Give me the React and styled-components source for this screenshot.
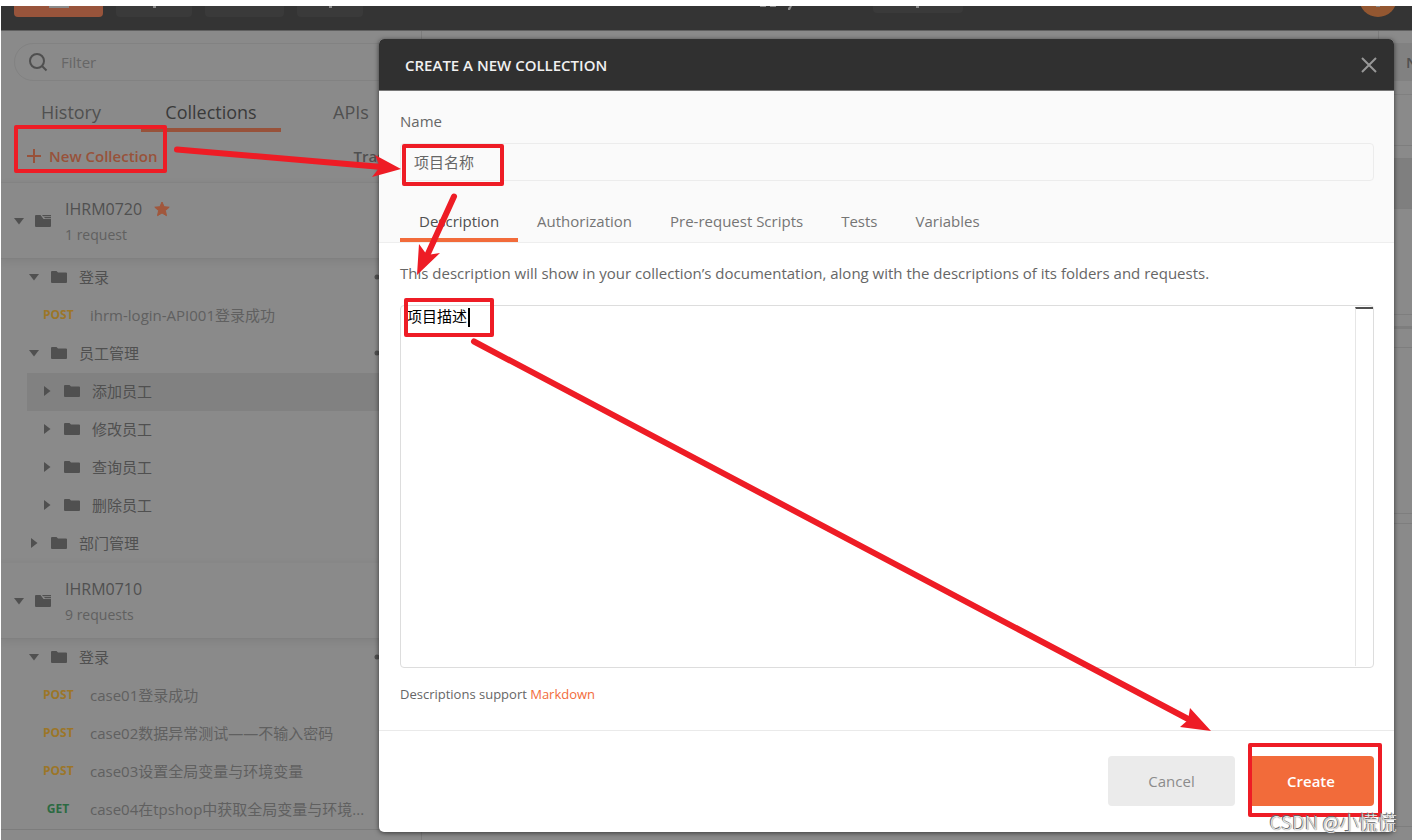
import { useState } from "react";
import styled, { createGlobalStyle } from "styled-components";

const collections = [
    {
        name: "IHRM0720",
        count: "1 request",
        starred: true,
        items: [
            { type: "folder", name: "登录", open: true, menu: true },
            { type: "request", method: "POST", name: "ihrm-login-API001登录成功" },
            { type: "folder", name: "员工管理", open: true, menu: true },
            { type: "folder", name: "添加员工", nested: true, selected: true },
            { type: "folder", name: "修改员工", nested: true },
            { type: "folder", name: "查询员工", nested: true },
            { type: "folder", name: "删除员工", nested: true },
            { type: "folder", name: "部门管理" },
        ],
    },
    {
        name: "IHRM0710",
        count: "9 requests",
        items: [
            { type: "folder", name: "登录", open: true, menu: true },
            { type: "request", method: "POST", name: "case01登录成功" },
            { type: "request", method: "POST", name: "case02数据异常测试——不输入密码" },
            { type: "request", method: "POST", name: "case03设置全局变量与环境变量" },
            { type: "request", method: "GET", name: "case04在tpshop中获取全局变量与环境..." },
        ],
    },
];

const sideTabs = ["History", "Collections", "APIs"];
const modalTabs = ["Description", "Authorization", "Pre-request Scripts", "Tests", "Variables"];

export default function App(){
    return(
        <Page>
            <GlobalStyle />
            <TopBar />
            <Body>
                <Sidebar />
                <Workspace />
            </Body>
            <Overlay>
                <CreateModal />
            </Overlay>
            <Annotations />
            <Watermark>CSDN @小慌慌</Watermark>
        </Page>
    );
}

function TopBar(){
    return(
        <Bar>
            <BarGroup>
                <BarButton $width={89} $primary><Stub $width={20} /></BarButton>
                <BarButton $width={76}><Stub $width={3} /></BarButton>
                <BarButton $width={79} />
                <BarButton $width={66}><Stub $width={3} /></BarButton>
            </BarGroup>
            <BarGroup>
                <WorkspaceIcon />
                <BarButton $width={90} $small><Stub $width={3} /></BarButton>
            </BarGroup>
            <Avatar><Stub $width={4} /></Avatar>
        </Bar>
    );
}

function Sidebar(){
    const [tab, setTab] = useState("Collections");

    return(
        <Side>
            <Filter>
                <SearchIcon />
                <input aria-label="Filter" placeholder="Filter" />
            </Filter>
            <SideTabs>
                {sideTabs.map(t => (
                    <SideTab key={t} $active={t === tab} onClick={() => setTab(t)}>{t}</SideTab>
                ))}
            </SideTabs>
            <Actions>
                <NewButton><PlusIcon />New Collection</NewButton>
                <TrashButton>Trash</TrashButton>
            </Actions>
            {collections.map(c => <Collection key={c.name} collection={c} />)}
            <NextCollection />
        </Side>
    );
}

function Collection({ collection }){
    return(
        <section>
            <CollectionHead>
                <Caret open />
                <CollectionIcon />
                <div>
                    <CollectionName>{collection.name}{collection.starred && <StarIcon />}</CollectionName>
                    <CollectionCount>{collection.count}</CollectionCount>
                </div>
            </CollectionHead>
            <Items>
                {collection.items.map(item => item.type === "folder" ? (
                    <Folder key={item.name} $nested={item.nested} $selected={item.selected}>
                        <Caret open={item.open} />
                        <FolderIcon />
                        <span>{item.name}</span>
                        {item.menu && <DotsIcon />}
                    </Folder>
                ) : (
                    <Request key={item.name}>
                        <Method $method={item.method}>{item.method}</Method>
                        <span>{item.name}</span>
                    </Request>
                ))}
            </Items>
        </section>
    );
}

function Workspace(){
    return(
        <Work>
            <EnvRow>
                <div></div>
                <EnvCell>
                    <select aria-label="N"><option>N</option></select>
                </EnvCell>
            </EnvRow>
            <Strip $height={51} />
            <Strip $height={13} />
            <Strip $height={50} $dark />
            <Strip $height={106} />
            <Strip $height={14} $thick />
            <Strip $height={19} />
            <Strip $height={166} />
            <Strip $height={10} />
            <Strip $height={303} />
        </Work>
    );
}

function CreateModal(){
    const [tab, setTab] = useState("Description");

    return(
        <Modal role="dialog" aria-labelledby="modal-title">
            <ModalHeader>
                <h2 id="modal-title">CREATE A NEW COLLECTION</h2>
                <button aria-label="Close"><CloseIcon /></button>
            </ModalHeader>
            <ModalTop>
                <Label htmlFor="name">Name</Label>
                <NameInput id="name" defaultValue="项目名称" />
                <ModalTabs>
                    {modalTabs.map(t => (
                        <ModalTab key={t} $active={t === tab} onClick={() => setTab(t)}>{t}</ModalTab>
                    ))}
                </ModalTabs>
            </ModalTop>
            <ModalContent>
                <Label htmlFor="description">
                    This description will show in your collection’s documentation, along with the descriptions of its folders and requests.
                </Label>
                <Editor>
                    <textarea id="description" defaultValue="项目描述" />
                    <TextCursor />
                    <Gutter />
                </Editor>
                <Support>Descriptions support <a href="#markdown">Markdown</a></Support>
            </ModalContent>
            <ModalFooter>
                <CancelButton>Cancel</CancelButton>
                <CreateButton>Create</CreateButton>
            </ModalFooter>
        </Modal>
    );
}

function Annotations(){
    return(
        <Marks width="1412" height="840" viewBox="0 0 1412 840">
            <g fill="none" stroke="#ee1c25" strokeWidth="4" strokeLinejoin="round">
                <rect x="16" y="127" width="149" height="44" />
                <rect x="404" y="146" width="98" height="38" />
                <rect x="406" y="300" width="86" height="35" />
                <rect x="1250" y="745" width="130" height="70" />
            </g>
            <g fill="none" stroke="#ee1c25" strokeWidth="6" strokeLinecap="round">
                <path d="M177 149.500L382 167" />
                <path d="M454 196.500L426 258" />
                <path d="M474 341.500L1190 720" />
            </g>
            <g fill="#ee1c25">
                <path d="M401 169L375 155L380 167L372 177Z" />
                <path d="M417 275L419 244L427 255L440 253Z" />
                <path d="M1211 731L1190 708L1188 720L1180 727Z" />
            </g>
        </Marks>
    );
}

const Caret = ({ open }) => (
    <svg width="12" height="12" viewBox="0 0 12 12" fill="#505050">
        <path d={open ? "M1 3H11L6 9.500Z" : "M3 1V11L9.500 6Z"} />
    </svg>
);

const FolderIcon = () => (
    <svg width="16" height="12" viewBox="0 0 16 12" fill="#505050">
        <path d="M1 0H5.500L7 1.500H15Q16 1.500 16 2.500V11Q16 12 15 12H1Q0 12 0 11V1Q0 0 1 0Z" />
    </svg>
);

const CollectionIcon = () => (
    <svg width="16" height="12" viewBox="0 0 16 12" fill="#505050">
        <path d="M1 0H5.500L8.500 4H16V11Q16 12 15 12H1Q0 12 0 11V1Q0 0 1 0Z" />
        <path d="M7 0H16V1.300H8ZM9 2H16V3.200H10Z" />
    </svg>
);

const StarIcon = () => (
    <svg width="16" height="16" viewBox="0 0 16 16" fill="#a1573c" stroke="#a1573c" strokeLinejoin="round">
        <path d="M8 1L10.100 5.700L15.200 6.200L11.400 9.600L12.500 14.700L8 12L3.500 14.700L4.600 9.600L0.800 6.200L5.900 5.700Z" />
    </svg>
);

const DotsIcon = () => (
    <svg width="20" height="6" viewBox="0 0 20 6" fill="#505050">
        <circle cx="3" cy="3" r="2.500" />
        <circle cx="10" cy="3" r="2.500" />
        <circle cx="17" cy="3" r="2.500" />
    </svg>
);

const SearchIcon = () => (
    <svg width="20" height="20" viewBox="0 0 20 20" fill="none" stroke="#4f4f4f" strokeWidth="2">
        <circle cx="9" cy="9" r="7" />
        <path d="M14 14L18.500 18.500" />
    </svg>
);

const PlusIcon = () => (
    <svg width="16" height="16" viewBox="0 0 16 16" fill="none" stroke="#98523a" strokeWidth="2">
        <path d="M8 1V15M1 8H15" />
    </svg>
);

const CloseIcon = () => (
    <svg width="16" height="16" viewBox="0 0 16 16" fill="none" stroke="#979797" strokeWidth="2">
        <path d="M1 1L15 15M15 1L1 15" />
    </svg>
);

const WorkspaceIcon = () => (
    <svg width="100" height="38" viewBox="0 0 100 38" fill="#8a8a8a">
        <path d="M0 27H6V28H0ZM10 27H16V28H10ZM28 29L30 27H32L30 31H28Z" />
    </svg>
);

const GlobalStyle = createGlobalStyle`
    *{
        box-sizing: border-box;
    }

    body{
        margin: 0;
        background: #FFF;
        font-family: "Open Sans", "Noto Sans CJK SC", sans-serif;
        font-size: 15px;
        line-height: 20px;
    }

    button, input, select, textarea{
        font: inherit;
        color: inherit;
        border: none;
        background: none;
        padding: 0;
        margin: 0;
        outline: none;
    }

    svg{
        flex-shrink: 0;
    }
`;

const Page = styled.div`
    position: relative;
    display: flex;
    flex-direction: column;
    height: 100vh;
    padding: 6px 0 0 1px;
    overflow: hidden;
`;

const Bar = styled.header`
    display: flex;
    justify-content: space-between;
    align-items: flex-end;
    flex-shrink: 0;
    height: 25px;
    padding: 0 15px 13px 13px;
    background: #343434;
    border-bottom: 1px solid #606060;
    overflow: hidden;
`;

const BarGroup = styled.div`
    display: flex;
    align-items: center;
    gap: 13px;
`;

const BarButton = styled.button`
    display: flex;
    justify-content: center;
    align-items: flex-end;
    width: ${props => props.$width}px;
    height: ${props => props.$small ? 30 : 38}px;
    padding-bottom: ${props => props.$small ? 5 : 9}px;
    border-radius: 4px;
    background: ${props => props.$primary ? "#98543b" : "#3a3a3a"};
`;

const Stub = styled.span`
    width: ${props => props.$width}px;
    height: 2px;
    background: #8a8a8a;
`;

const Avatar = styled.div`
    display: flex;
    justify-content: center;
    align-items: flex-end;
    width: 38px;
    height: 38px;
    padding-bottom: 10px;
    border-radius: 50%;
    background: #935731;
`;

const Body = styled.div`
    display: flex;
    flex: 1;
    min-height: 0;
    background: #8a8a8a;
`;

const Side = styled.aside`
    width: 421px;
    flex-shrink: 0;
    border-right: 1px solid #7c7c7c;
    color: #505050;
    overflow: hidden;
`;

const Filter = styled.div`
    display: flex;
    align-items: center;
    gap: 13px;
    height: 38px;
    margin: 12px 13px 0;
    padding: 0 13px;
    border: 1px solid #828282;
    border-radius: 19px;

    input{
        flex: 1;
    }

    input::placeholder{
        color: #666;
        opacity: 1;
    }
`;

const SideTabs = styled.nav`
    display: flex;
    margin-top: 13px;
`;

const SideTab = styled.button`
    flex: 1;
    height: 38px;
    padding-top: 2px;
    font-size: 18px;
    color: ${props => props.$active ? "#3a3a3a" : "#505050"};
    border-bottom: 4px solid ${props => props.$active ? "#98523a" : "transparent"};
`;

const Actions = styled.div`
    display: flex;
    justify-content: space-between;
    align-items: center;
    height: 51px;
    padding: 0 27px 2px 25px;
    border-bottom: 1px solid #868686;
    font-weight: 600;
`;

const NewButton = styled.button`
    display: flex;
    align-items: center;
    gap: 7px;
    color: #98523a;
`;

const TrashButton = styled.button`
    color: #505050;
`;

const CollectionHead = styled.div`
    display: flex;
    align-items: center;
    gap: 10px;
    height: 76px;
    padding: 0 12px;
    border-bottom: 1px solid #808080;
    box-shadow: 0 2px 8px rgba(0, 0, 0, 0.080);

    > div{
        margin-left: 4px;
        padding-top: 2px;
    }
`;

const CollectionName = styled.div`
    display: flex;
    align-items: center;
    gap: 12px;
    font-size: 16px;
    line-height: 26px;
`;

const CollectionCount = styled.div`
    color: #606060;
    font-size: 14px;
    line-height: 26px;
`;

const Items = styled.div`
    padding-left: 26px;
`;

const Folder = styled.div`
    display: flex;
    align-items: center;
    gap: 11px;
    height: 38px;
    padding: 0 27px 2px ${props => props.$nested ? 14 : 1}px;
    background: ${props => props.$selected ? "#818181" : "none"};

    span{
        margin-left: 1px;
    }

    svg:last-child{
        margin-left: auto;
    }
`;

const Request = styled.div`
    display: flex;
    align-items: center;
    gap: 17px;
    height: 38px;
    padding: 0 0 2px 16px;
    color: #606060;
    white-space: nowrap;
`;

const Method = styled.span`
    width: 30px;
    font-size: 12px;
    font-weight: 700;
    text-align: center;
    color: ${props => props.$method === "GET" ? "#2c6a42" : "#9c7628"};
`;

const NextCollection = styled.div`
    height: 76px;
    border-top: 1px solid #7c7c7c;
`;

const Work = styled.main`
    flex: 1;
    min-width: 0;
    overflow: hidden;
`;

const EnvRow = styled.div`
    display: grid;
    grid-template-columns: 1fr 34px;
    height: 64px;
    border-bottom: 1px solid #808080;
`;

const EnvCell = styled.div`
    padding-top: 12px;
    border-left: 1px solid #7c7c7c;

    select{
        appearance: none;
        width: 100%;
        height: 38px;
        padding-left: 27px;
        background: #818181;
        color: #505050;
        font-weight: 600;
    }
`;

const Strip = styled.div`
    height: ${props => props.$height}px;
    background: ${props => props.$dark ? "#7f7f7f" : "none"};
    border-bottom: ${props => props.$thick ? 3 : 1}px solid #7e7e7e;
`;

const Overlay = styled.div`
    position: absolute;
    inset: 0;
    padding: 39px 18px 7px 379px;
`;

const Modal = styled.div`
    border-radius: 5px;
    background: #FFF;
    color: #666;
    box-shadow: 0 1px 5px rgba(0, 0, 0, 0.600);
    overflow: hidden;
`;

const ModalHeader = styled.header`
    display: flex;
    justify-content: space-between;
    align-items: center;
    height: 52px;
    padding: 0 17px 0 26px;
    background: #303030;
    border-bottom: 1px solid #777;

    h2{
        margin: 0;
        color: #F0F0F0;
        font-size: 15px;
        font-weight: 600;
    }

    button{
        display: flex;
    }
`;

const ModalTop = styled.div`
    padding: 20px 20px 0 21px;
    background: #FAFAFA;
    border-bottom: 1px solid #EEE;
`;

const Label = styled.label`
    display: block;
`;

const NameInput = styled.input`
    display: block;
    width: 100%;
    height: 38px;
    margin-top: 12px;
    padding: 0 13px 2px;
    border: 1px solid #ECECEC;
    border-radius: 4px;
`;

const ModalTabs = styled.nav`
    display: flex;
    margin-top: 23px;
`;

const ModalTab = styled.button`
    height: 38px;
    padding: 0 19px;
    color: ${props => props.$active ? "#505050" : "#757575"};
    border-bottom: 4px solid ${props => props.$active ? "#F26B3A" : "transparent"};
`;

const ModalContent = styled.div`
    padding: 20px 20px 26px 21px;
`;

const Editor = styled.div`
    position: relative;
    display: flex;
    height: 363px;
    margin-top: 22px;
    border: 1px solid #DDD;
    border-radius: 4px;

    textarea{
        flex: 1;
        padding: 0 6px;
        color: #000;
        resize: none;
    }
`;

const TextCursor = styled.span`
    position: absolute;
    left: 67px;
    top: 2px;
    width: 2px;
    height: 19px;
    background: #000;
`;

const Gutter = styled.div`
    width: 18px;
    margin: 1px 0;
    border-left: 1px solid #E6E6E6;
    border-top: 2px solid #505050;
`;

const Support = styled.p`
    margin: 16px 0 0;
    font-size: 13px;

    a{
        color: #F26B3A;
        text-decoration: none;
    }
`;

const ModalFooter = styled.footer`
    display: flex;
    justify-content: flex-end;
    gap: 13px;
    padding: 25px 20px 26px;
    border-top: 1px solid #EAEAEA;
`;

const CancelButton = styled.button`
    width: 127px;
    height: 50px;
    border-radius: 4px;
    background: #EBEBEB;
    color: #8c8c8c;
`;

const CreateButton = styled(CancelButton)`
    width: 126px;
    background: #F26B3A;
    color: #FFF;
    font-weight: 600;
`;

const Marks = styled.svg`
    position: absolute;
    left: 0;
    top: 0;
    pointer-events: none;
`;

const Watermark = styled.div`
    position: absolute;
    right: 15px;
    bottom: 4px;
    color: #E6E6E6;
    font-family: "Noto Sans CJK SC", sans-serif;
    font-size: 19px;
    font-weight: 300;
    line-height: 28px;
    text-shadow: -1px -1px 0 #666, 0 0 1px #555;
`;
